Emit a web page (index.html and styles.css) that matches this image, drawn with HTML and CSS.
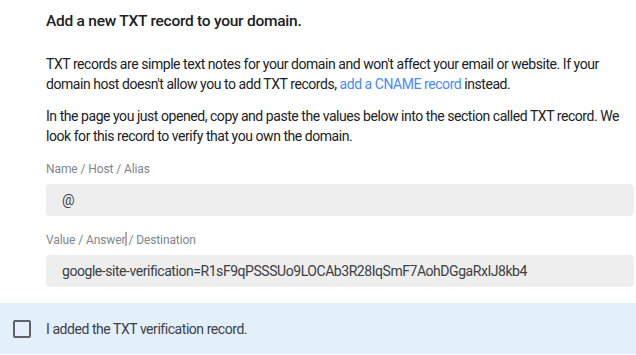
FILE: index.html
```html
<!DOCTYPE html>
<html lang="en">
<head>
  <meta charset="UTF-8">
  <meta name="viewport" content="width=device-width, initial-scale=1.0">
  <title>Verify domain</title>
  <link rel="stylesheet" href="styles.css">
</head>
<body>
  <!-- TXT record instructions -->
  <div class="content">
    <h1>Add a new TXT record to your domain.</h1>

    <p class="intro">TXT records are simple text notes for your domain and won't affect your email or website. If your domain host doesn't allow you to add TXT records, <a href="#">add a CNAME record</a> instead.</p>

    <p class="steps">In the page you just opened, copy and paste the values below into the section called TXT record. We look for this record to verify that you own the domain.</p>

    <div class="field-label">Name / Host / Alias</div>
    <div class="field-value">@</div>

    <div class="field-label second">Value / Answer<span class="caret"></span>/ Destination</div>
    <div class="field-value">google-site-verification=R1sF9qPSSSUo9LOCAb3R28IqSmF7AohDGgaRxIJ8kb4</div>
  </div>

  <!-- Confirmation row -->
  <label class="confirm">
    <span class="checkbox"></span>
    <span>I added the TXT verification record.</span>
  </label>
</body>
</html>
```

FILE: styles.css
```css
/* Global Reset */
* {
  margin: 0;
  padding: 0;
  box-sizing: border-box;
  font-family: 'Roboto', sans-serif;
}

body {
  background-color: #fff;
  color: #202124;
  font-size: 14px;
  line-height: 20px;
  letter-spacing: -0.45px;
}

/* Instructions */
.content {
  padding: 11px 2px 0 46px;
}

h1 {
  font-size: 15.5px;
  font-weight: 500;
  line-height: 20px;
  letter-spacing: -0.25px;
  color: #202124;
}

.intro {
  margin-top: 23px;
}

.steps {
  margin-top: 12px;
}

a {
  color: #4c8bf5;
  text-decoration: none;
}

/* Record fields */
.field-label {
  margin-top: 15px;
  font-size: 12px;
  line-height: 16px;
  letter-spacing: -0.1px;
  color: #80868b;
}

.field-label.second {
  margin-top: 16px;
}

.caret {
  display: inline-block;
  width: 2px;
  height: 14px;
  margin: 0 1px -2px 0;
  background-color: #b0b0b0;
}

.field-value {
  margin-top: 7px;
  height: 32px;
  display: flex;
  align-items: center;
  padding-left: 16px;
  background-color: #eeeeee;
  border-radius: 4px;
  color: #3c4043;
  font-size: 14px;
}

/* Confirmation */
.confirm {
  margin-top: 16px;
  height: 51px;
  display: flex;
  align-items: center;
  background-color: #e3f0fc;
  color: #3c4043;
  cursor: pointer;
}

.checkbox {
  width: 18px;
  height: 18px;
  margin: 0 15px 0 13px;
  border: 2px solid #5f6368;
  border-radius: 2px;
}
```
